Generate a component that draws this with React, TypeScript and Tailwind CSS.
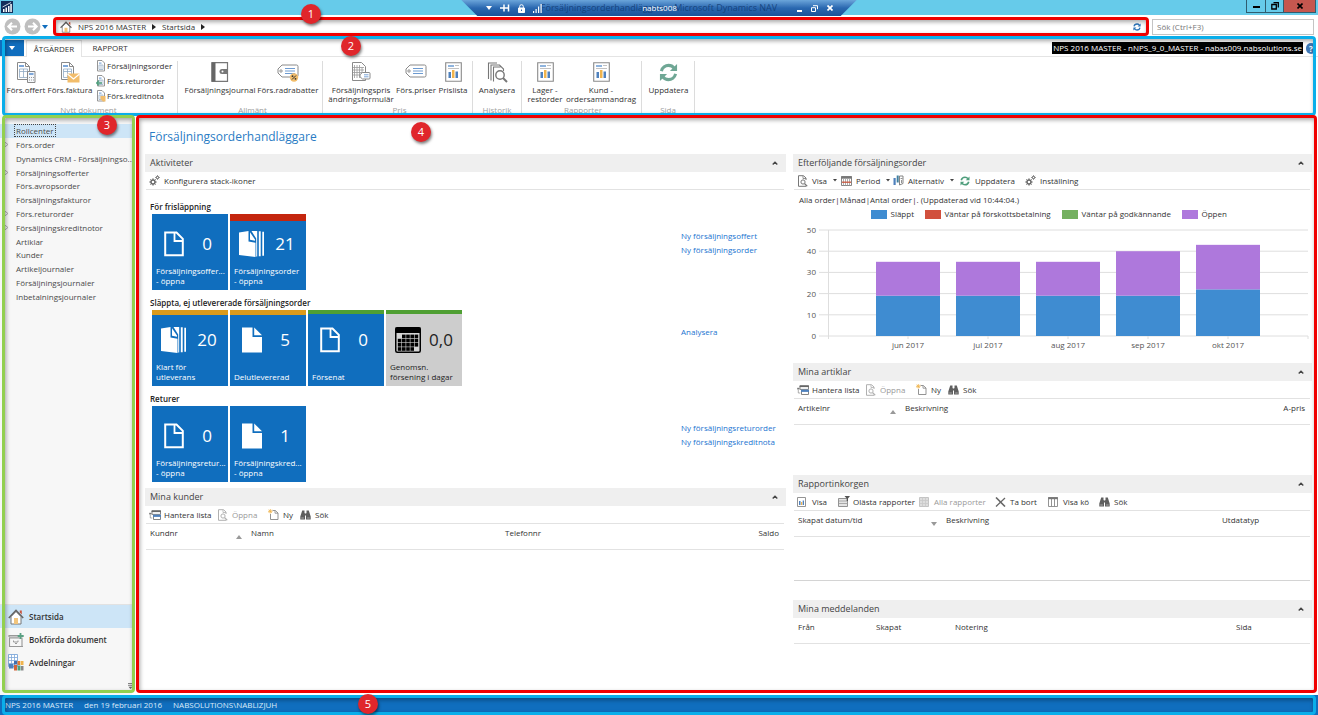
import type { ReactNode } from 'react'

/* ---------- small icons ---------- */

function PageIcon() {
  return (
    <svg width="20" height="26" viewBox="0 0 20 26" fill="none" stroke="#fff" strokeWidth="2">
      <path d="M1.200 1.500h11.300l6.300 6.300v16.500H1.200z" />
      <path d="M10.500 1.500v8.500h8" strokeWidth="1.800" />
    </svg>
  )
}

function SolidPageIcon() {
  return (
    <svg width="20" height="26" viewBox="0 0 20 26" fill="#fff">
      <path d="M0 .5h10.500v9.500H20v15.500H0z" />
      <path d="M12.200 .5L20 8.300h-7.800z" />
    </svg>
  )
}

function StackIcon() {
  return (
    <svg width="26" height="28" viewBox="0 0 26 28" fill="#fff">
      <path d="M0 2.500L9.500 1v10.500l7 1.300V27L0 25z" />
      <path d="M11 2.200l5 7.300v1.300l-5-1z" />
      <path d="M12.500 1h5.700v25.500h-1V8.500z" />
      <path d="M19.800 1.200h1.900v25h-1.900zM23.300 1.700h1.700v24h-1.700z" />
    </svg>
  )
}

function CalendarIcon() {
  const cells = []
  for (let r = 0; r < 4; r++) {
    for (let c = 0; c < 5; c++) {
      if ((r === 0 && c === 0) || (r === 3 && c === 4)) continue
      cells.push(<rect key={`${r}-${c}`} x={2.8 + c * 4.2} y={7.6 + r * 4.2} width="3.600" height="3.600" fill="#000" />)
    }
  }
  return (
    <svg width="26" height="26" viewBox="0 0 26 26">
      <rect x="0.750" y="0.750" width="24.500" height="24.500" rx="1.500" fill="#d4d4d4" stroke="#000" strokeWidth="1.500" />
      <rect x="0.500" y="0.500" width="25" height="5.500" fill="#000" />
      {cells}
    </svg>
  )
}

function DocGrid() {
  return (
    <>
      <path d="M1.500 .5h8l4 4v13h-12z" fill="#fff" stroke="#8a8a8a" />
      <path d="M9.500 .5v4h4" fill="none" stroke="#8a8a8a" />
      <path d="M3 3h5v2H3z" fill="#7da7d9" />
      <path d="M3.500 7h8v8.500h-8zM3.500 9.500h8M7.500 7v8.500" fill="none" stroke="#8fa9c4" strokeWidth=".8" />
    </>
  )
}

function OfferIcon() {
  return (
    <svg width="20" height="21" viewBox="0 0 20 21">
      <DocGrid />
      <path d="M11.500 9.500h7.500v11h-7.500z" fill="#f5f8fb" stroke="#8a8a8a" />
      <path d="M13 11h4.500v2H13z" fill="#7da7d9" />
      <path d="M13 15.500h1M15 15.500h1M17 15.500h1M13 18h1M15 18h1M17 18h1" stroke="#999" />
    </svg>
  )
}

function InvoiceIcon() {
  return (
    <svg width="20" height="21" viewBox="0 0 20 21">
      <DocGrid />
      <path d="M7.500 11.500H19.500v9H7.500z" fill="#f2bd6b" />
      <path d="M7.500 12l6 5 6-5" fill="none" stroke="#fff" strokeWidth="1.100" />
    </svg>
  )
}

function SmallDocIcon({ kind }: { kind: 'order' | 'return' | 'credit' }) {
  return (
    <svg width="10" height="12" viewBox="0 0 10 12">
      <path d="M1.500 .5h4.500l2.500 2.500v8h-7z" fill="#fff" stroke="#8a8a8a" strokeWidth=".9" />
      <path d="M3 2.500h2.500v1.200H3z" fill="#7da7d9" />
      <path d="M3 5h4v4.500H3zM5 5v4.500" fill="none" stroke="#8fa9c4" strokeWidth=".7" />
      {kind === 'return' && <path d="M6 8H1M3 5.500L.7 8 3 10.500" fill="none" stroke="#4f9e7c" strokeWidth="1.300" />}
      {kind === 'credit' && <path d="M4.500 6H9.500v5.500H7L4.500 9z" fill="#f2bd6b" />}
    </svg>
  )
}

function JournalIcon() {
  return (
    <svg width="18" height="20" viewBox="0 0 18 20">
      <path d="M1 .7h15.500v18.600H1z" fill="#fff" stroke="#777" strokeWidth="1.200" />
      <path d="M.5 .5h4v19h-4z" fill="#666" />
      <path d="M11 7h6v5h-6a2.500 2.500 0 0 1 0-5z" fill="#777" />
      <circle cx="11.500" cy="9.500" r="1" fill="#fff" />
    </svg>
  )
}

function TagIcon({ percent }: { percent?: boolean }) {
  return (
    <svg width="22" height="20" viewBox="0 0 22 20">
      <path d="M5 3h14.500a1.500 1.500 0 0 1 1.500 1.500v9a1.500 1.500 0 0 1-1.500 1.500H5L1 11V7z" fill="#fff" stroke="#8a8a8a" />
      <circle cx="4" cy="9" r="1.200" fill="none" stroke="#777" strokeWidth=".8" />
      <path d="M8 6.500h10M8 9h10M8 11.500h10" stroke="#6d9bd1" />
      {percent && (
        <>
          <circle cx="17" cy="15.500" r="4.200" fill="#f2bd6b" />
          <path d="M15 17.500l4-4" stroke="#333" />
          <circle cx="15.500" cy="14.200" r=".9" fill="#333" />
          <circle cx="18.500" cy="16.800" r=".9" fill="#333" />
        </>
      )}
    </svg>
  )
}

function PriceFormIcon() {
  return (
    <svg width="20" height="20" viewBox="0 0 20 20">
      <path d="M1.500 .5h9l4 4v14h-13z" fill="#fff" stroke="#8a8a8a" />
      <path d="M3.500 3v13M6 3v13M8.500 3v13M11 5v11M2 5.500h11M2 8h11M2 10.500h11M2 13h11" stroke="#999" strokeWidth=".8" />
      <path d="M11.500 10.500h6.500a1 1 0 0 1 1 1v4.500a1 1 0 0 1-1 1h-6.500L9 14.800v-2.200z" fill="#fff" stroke="#8a8a8a" />
      <path d="M13 12.800h4.500M13 14.800h4.500" stroke="#6d9bd1" strokeWidth=".9" />
    </svg>
  )
}

function ReportIcon() {
  return (
    <svg width="17" height="20" viewBox="0 0 17 20">
      <path d="M.7 .7h15.600v18.600H.7z" fill="#fff" stroke="#8a8a8a" strokeWidth="1.100" />
      <path d="M3 3h6v2H3z" fill="#8fb4de" />
      <path d="M10 3.500h4M3 6.500h11" stroke="#bbb" strokeWidth=".9" />
      <path d="M3.500 10H6v6H3.500z" fill="#4f81bd" />
      <path d="M7 8h2.500v8H7z" fill="#f0b44d" />
      <path d="M10.500 9.500H13V16h-2.500z" fill="#4f81bd" />
    </svg>
  )
}

function AnalyseIcon() {
  return (
    <svg width="21" height="21" viewBox="0 0 21 21" fill="none" stroke="#777" strokeWidth="1.100">
      <path d="M1.500 17V1h8.500M4 18.500V3h8.500l4 4v2M6.500 19.500V5h7" />
      <circle cx="13" cy="13" r="4.200" fill="#fff" strokeWidth="1.400" />
      <path d="M16 16l4 4" strokeWidth="2" />
    </svg>
  )
}

function RefreshIcon({ size, color }: { size: number; color: string }) {
  return (
    <svg width={size} height={size} viewBox="0 0 20 20" fill="none" stroke={color} strokeWidth="3.200">
      <path d="M2.500 8.500C3.500 4.500 7 2.500 10 2.500c2.500 0 4.500 1 6 3" />
      <path d="M17.500 11.500c-1 4-4.500 6-7.500 6-2.500 0-4.500-1-6-3" />
      <path d="M19 1v7.500h-7.500z" fill={color} stroke="none" />
      <path d="M1 19v-7.500h7.500z" fill={color} stroke="none" />
    </svg>
  )
}

function GearsIcon() {
  return (
    <svg width="11" height="11" viewBox="0 0 11 11" fill="none" stroke="#666">
      <circle cx="4" cy="7" r="2" strokeWidth="1.400" />
      <path d="M4 3.300v1.700M4 9v1.700M.3 7H2M6 7h1.700M1.400 4.400l1.200 1.200M5.400 8.400l1.200 1.200M6.600 4.400L5.400 5.600M2.600 8.400L1.400 9.600" />
      <circle cx="8.500" cy="2.500" r="1.100" />
      <path d="M8.500 .2v1M8.500 3.800v1M6.200 2.500h1M9.800 2.500h1M6.900 .9l.7.700M10.100 4.100l-.7-.7M10.100 .9l-.7.700M6.900 4.100l.7-.7" strokeWidth=".8" />
    </svg>
  )
}

function ManageIcon() {
  return (
    <svg width="12" height="10" viewBox="0 0 12 10">
      <path d="M3 .9h8.500v3.500H3z" fill="#fff" stroke="#777" strokeWidth=".9" />
      <path d="M2.600 .4h9.300v1.700H2.600z" fill="#666" />
      <path d="M.2 2.800h2.300v1.700H.2z" fill="#777" />
      <path d="M4.500 5.500h7v4h-7z" fill="#fff" stroke="#777" strokeWidth=".9" />
      <path d="M4 4.700h8v2.200H4z" fill="#4f81bd" />
      <path d="M1.300 5v3h2" fill="none" stroke="#999" strokeWidth=".8" />
    </svg>
  )
}

function ViewIcon({ faded }: { faded?: boolean }) {
  const color = faded ? '#b0b0b0' : '#777'
  return (
    <svg width="11" height="12" viewBox="0 0 11 12" fill="none" stroke={color}>
      <path d="M9 5V3L6.500 .7H1.500v10.600H9" />
      <path d="M6 1v2.500h3" strokeWidth=".8" />
      <circle cx="6" cy="7" r="2.100" />
      <path d="M7.700 8.700l2.500 2.500" strokeWidth="1.300" />
    </svg>
  )
}

function NewIcon() {
  return (
    <svg width="11" height="11" viewBox="0 0 11 11" fill="none">
      <path d="M4.500 1.500h2.800L10 4v6.500H2.500V5" stroke="#888" strokeWidth=".9" />
      <path d="M7 1.500V4.200h3" stroke="#888" strokeWidth=".8" />
      <path d="M2.300 0v4.600M0 2.300h4.600M.7 .7l3.200 3.200M3.900 .7L.7 3.900" stroke="#f0b44d" strokeWidth=".8" />
    </svg>
  )
}

function BinocularsIcon() {
  return (
    <svg width="11" height="10" viewBox="0 0 11 10" fill="#5f5f5f">
      <path d="M2.200 .5h2.300v2.300l.5 1V9.500H.3V6.500zM6.500 .5h2.300l1.900 6v3H6V3.800l.5-1z" />
      <path d="M4.500 3.500h2v2h-2z" />
      <path d="M1.300 7.500h2.500v1H1.300zM7.200 7.500h2.500v1H7.200z" fill="#aaa" />
    </svg>
  )
}

function PeriodIcon() {
  return (
    <svg width="11" height="10" viewBox="0 0 11 10">
      <path d="M.5 .5h10v9H.5z" fill="#fff" stroke="#777" strokeWidth=".9" />
      <path d="M.3 .3h10.400v2.400H.3z" fill="#777" />
      <path d="M2.500 3v6.500M4.500 3v6.500M6.500 3v6.500M8.500 3v6.500" stroke="#999" strokeWidth=".8" />
      <path d="M1 6.200h9" stroke="#c9553d" strokeWidth="1.300" />
    </svg>
  )
}

function OptionsIcon() {
  return (
    <svg width="11" height="11" viewBox="0 0 11 11">
      <path d="M.5 3h2.200v7H.5z" fill="#4f81bd" />
      <path d="M3.700 .5h2v7h-2z" fill="#3f7f9e" />
      <path d="M6.500 1H10v7.500L6.500 10z" fill="#fff" stroke="#777" strokeWidth=".9" />
      <path d="M7.500 3.500H9.500M8.500 5v3" stroke="#777" strokeWidth=".8" />
    </svg>
  )
}

function InboxViewIcon() {
  return (
    <svg width="9" height="10" viewBox="0 0 9 10">
      <path d="M.5 .5h8v9h-8z" fill="#fff" stroke="#888" strokeWidth=".9" />
      <path d="M2 4h1.500v4H2z" fill="#4f81bd" />
      <path d="M4 5h1.200v3H4z" fill="#f0b44d" />
      <path d="M5.700 3.500H7V8H5.700z" fill="#4f81bd" />
    </svg>
  )
}

function UnreadIcon() {
  return (
    <svg width="12" height="11" viewBox="0 0 12 11">
      <path d="M.5 2.500h9v8h-9z" fill="#e4e4e4" stroke="#888" strokeWidth=".9" />
      <path d="M.5 5h9M.5 7.500h9" stroke="#999" strokeWidth=".8" />
      <path d="M6.500 0H12L10 2.500V5H8.700V2.500z" fill="#555" />
    </svg>
  )
}

function AllIcon() {
  return (
    <svg width="10" height="10" viewBox="0 0 10 10">
      <path d="M.5 .5h9v9h-9z" fill="#ddd" stroke="#c4c4c4" />
      <path d="M3.500 .5v9M6.500 .5v9M.5 3.500h9M.5 6.500h9" stroke="#c9c9c9" strokeWidth=".8" />
    </svg>
  )
}

function DeleteIcon() {
  return (
    <svg width="11" height="10" viewBox="0 0 11 10" stroke="#666" fill="none">
      <path d="M1 .5l9 9" strokeWidth="1.600" />
      <path d="M10 1L1 9.500" strokeWidth="1.200" />
    </svg>
  )
}

function QueueIcon() {
  return (
    <svg width="10" height="10" viewBox="0 0 10 10">
      <path d="M.5 .5h9v9h-9zM3.500 2v7.500M6.500 2v7.500" fill="#fff" stroke="#888" strokeWidth=".9" />
      <path d="M.2 .2h9.600v2H.2z" fill="#777" />
    </svg>
  )
}

function HomeIcon({ size }: { size: number }) {
  return (
    <svg width={size} height={size} viewBox="0 0 16 16">
      <path d="M11.800 1.500h2v4l-2-2z" fill="#c9553d" />
      <path d="M3 7.500v7.500h10V7.500L8 2.500z" fill="#fff" stroke="#777" />
      <path d="M6 9h4v6H6z" fill="#f2c57c" />
      <path d="M.8 9L8 1.500 15.200 9" fill="none" stroke="#666" strokeWidth="1.600" />
    </svg>
  )
}

function ArchiveIcon() {
  return (
    <svg width="16" height="16" viewBox="0 0 16 16" fill="none">
      <path d="M1 5V3.500h9M1.500 6h12.500v8.500H1.500z" stroke="#999" strokeWidth="1.100" />
      <path d="M1 5h10M1 14.500h14" stroke="#999" />
      <path d="M5.500 8.500v1.500h4.500V8.500M7 11.500h2" stroke="#999" />
      <path d="M12.500 1v6M9.700 4h6" stroke="#5aa083" strokeWidth="1.800" />
    </svg>
  )
}

function DepartmentsIcon() {
  return (
    <svg width="16" height="17" viewBox="0 0 16 17">
      <path d="M.5 .5h9v12h-9z" fill="#fff" stroke="#7da7d9" strokeWidth=".9" />
      <path d="M.5 3.500h9M.5 6.500h9M.5 9.500h9M3.500 .5v12M6.500 .5v12" stroke="#7da7d9" strokeWidth=".8" />
      <path d="M1 10h4.500v4.500H1z" fill="#4f81bd" />
      <path d="M6 11h3v5.500H6z" fill="#d3633a" />
      <path d="M9.500 11.500h3v5h-3z" fill="#4f9e7c" />
      <path d="M6 7h3v3.500H6z" fill="#3f6fae" />
      <path d="M9.500 7h2.500v4H9.500z" fill="#e07a35" />
      <path d="M12.500 7h3v4h-3z" fill="#f0b44d" />
      <path d="M13 12h2.500v4.500H13z" fill="#888" />
    </svg>
  )
}

function NavArrow({ back }: { back?: boolean }) {
  return (
    <svg width="17" height="17" viewBox="0 0 17 17" fill="none">
      <circle cx="8.500" cy="8.500" r="8" fill="#bfbfbf" />
      <path d={back ? 'M13 8.500H4.500M8 4.800L4.300 8.500 8 12.200' : 'M4 8.500h8.500M9 4.800l3.700 3.700L9 12.200'} stroke="#fff" strokeWidth="2" />
    </svg>
  )
}

function Caret() {
  return (
    <svg width="6" height="4" viewBox="0 0 6 4">
      <path d="M0 0h6L3 4z" fill="currentColor" />
    </svg>
  )
}

function Chevron() {
  return (
    <svg width="6" height="4" viewBox="0 0 6 4" fill="none">
      <path d="M.7 3.500L3 1.200l2.300 2.300" stroke="#444" strokeWidth="1.400" />
    </svg>
  )
}

/* ---------- callouts ---------- */

function Frame({ className }: { className: string }) {
  return (
    <div
      className={`absolute z-10 pointer-events-none rounded-[4px] border-[3px] shadow-[inset_1px_2px_4px_rgba(0,0,0,0.35)] ${className}`}
    />
  )
}

function Badge({ n, className }: { n: number; className: string }) {
  return (
    <div
      className={`absolute z-20 w-5 h-5 rounded-full bg-[#e0262b] text-white text-[11px] leading-5 text-center shadow-[1px_2px_3px_rgba(0,0,0,0.5)] ${className}`}
    >
      {n}
    </div>
  )
}

/* ---------- ribbon ---------- */

interface BigButtonProps {
  icon: ReactNode
  lines: string[]
  width: string
}

function BigButton({ icon, lines, width }: BigButtonProps) {
  return (
    <button className={`flex flex-col items-center shrink-0 whitespace-nowrap leading-[9px] ${width}`}>
      <span className="h-[22px] mb-[2px] flex items-center">{icon}</span>
      {lines.map((line) => (
        <span key={line}>{line}</span>
      ))}
    </button>
  )
}

function RibbonGroup({ title, width, children }: { title: string; width: string; children: ReactNode }) {
  return (
    <div className={`flex flex-col justify-between h-[54px] border-r border-[#dcdcdc] ${width}`}>
      <div className="flex">{children}</div>
      <div className="text-center text-[#a0a0a0] leading-[10px]">{title}</div>
    </div>
  )
}

const smallButtons = [
  { label: 'Försäljningsorder', kind: 'order' },
  { label: 'Förs.returorder', kind: 'return' },
  { label: 'Förs.kreditnota', kind: 'credit' },
] as const

function Ribbon() {
  return (
    <section className="relative bg-white">
      <div className="flex items-end h-[21px] pt-1 border-b border-[#e4e4e4]">
        <button aria-label="Meny" className="w-6 h-4 bg-[#106ebe] flex items-center justify-center text-white">
          <Caret />
        </button>
        <button className="w-[56px] h-[17px] ml-[2px] -mb-px bg-white border-x border-t border-[#e4e4e4] leading-4">
          ÅTGÄRDER
        </button>
        <button className="w-[56px] h-4 leading-4">RAPPORT</button>
        <span className="ml-auto mb-[2px] px-px bg-black text-white leading-[12px]">
          NPS 2016 MASTER - nNPS_9_0_MASTER - nabas009.nabsolutions.se
        </span>
        <button aria-label="Hjälp" className="ml-[3px] mr-[2px] mb-[2px] w-[10px] h-[11px] rounded-full bg-[#3f78b5] text-white font-bold leading-[11px]">
          ?
        </button>
      </div>

      <div className="flex pt-1">
        <RibbonGroup title="Nytt dokument" width="w-[178px]">
          <div className="w-1" />
          <BigButton icon={<OfferIcon />} lines={['Förs.offert']} width="w-[44px]" />
          <BigButton icon={<InvoiceIcon />} lines={['Förs.faktura']} width="w-[44px]" />
          <div className="ml-1 -mt-[3px] h-[45px] flex flex-col">
            {smallButtons.map((b) => (
              <button key={b.label} className="flex items-center gap-px h-[15px] whitespace-nowrap">
                <SmallDocIcon kind={b.kind} />
                {b.label}
              </button>
            ))}
          </div>
        </RibbonGroup>
        <RibbonGroup title="Allmänt" width="w-[145px] pl-[5px]">
          <BigButton icon={<JournalIcon />} lines={['Försäljningsjournal']} width="w-[74px]" />
          <BigButton icon={<TagIcon percent />} lines={['Förs.radrabatter']} width="w-[62px]" />
        </RibbonGroup>
        <RibbonGroup title="Pris" width="w-[150px] pl-[4px]">
          <BigButton icon={<PriceFormIcon />} lines={['Försäljningspris', 'ändringsformulär']} width="w-[68px]" />
          <BigButton icon={<TagIcon />} lines={['Förs.priser']} width="w-[42px]" />
          <BigButton icon={<ReportIcon />} lines={['Prislista']} width="w-[32px]" />
        </RibbonGroup>
        <RibbonGroup title="Historik" width="w-[49px]">
          <BigButton icon={<AnalyseIcon />} lines={['Analysera']} width="w-[48px]" />
        </RibbonGroup>
        <RibbonGroup title="Rapporter" width="w-[120px] pl-[3px]">
          <BigButton icon={<ReportIcon />} lines={['Lager -', 'restorder']} width="w-[40px]" />
          <BigButton icon={<ReportIcon />} lines={['Kund -', 'ordersammandrag']} width="w-[72px]" />
        </RibbonGroup>
        <RibbonGroup title="Sida" width="w-[53px]">
          <BigButton icon={<RefreshIcon size={19} color="#6fa795" />} lines={['Uppdatera']} width="w-[53px]" />
        </RibbonGroup>
      </div>
      <Frame className="left-[2px] right-[2px] top-0 -bottom-px border-[#0aaeea]" />
      <Badge n={2} className="left-[341px] top-0" />
    </section>
  )
}

/* ---------- top bars ---------- */

function RemoteBar() {
  return (
    <div className="absolute z-20 left-[35%] right-[35%] top-0 h-4 flex items-center text-white bg-linear-to-b from-[#6ba5da] via-[#2a68b0] to-[#1a5299] [clip-path:polygon(0_0,100%_0,calc(100%_-_16px)_100%,16px_100%)]">
      <span className="absolute inset-x-0 text-center text-[9px] text-[#0f3870]/80 whitespace-nowrap">
        Försäljningsorderhandläggare - Microsoft Dynamics NAV
      </span>
      <div className="relative flex-1 flex items-center gap-2 pl-[25px]">
        <Caret />
        <svg width="10" height="8" viewBox="0 0 10 8" stroke="#fff" fill="none">
          <path d="M0 4h4M4 .5v7M8.500 .5v7M4 4h4.500" strokeWidth="1.500" />
        </svg>
        <svg width="7" height="9" viewBox="0 0 7 9" fill="none" stroke="#fff">
          <path d="M1.700 4V2.500a1.800 1.800 0 0 1 3.600 0V4" />
          <path d="M.5 4h6v4.500h-6z" fill="#fff" />
          <path d="M3.500 5.500v1.500" stroke="#2a68b0" />
        </svg>
        <svg width="9" height="9" viewBox="0 0 9 9" fill="#fff">
          <path d="M0 7h1.200v2H0zM2.500 5h1.200v4H2.500zM5 2.500h1.200V9H5zM7.500 0h1.200v9H7.500z" />
        </svg>
      </div>
      <span className="relative">nabts008</span>
      <div className="relative flex-1 flex items-center justify-end gap-[9px] pr-[24px]">
        <button aria-label="Minimera" className="w-[5px] h-[7px] border-b-2 border-white" />
        <button aria-label="Återställ">
          <svg width="7" height="7" viewBox="0 0 7 7" fill="none" stroke="#fff">
            <path d="M2 .7h4.500v3.500M.5 2.700H4.500v3.800H.5z" />
          </svg>
        </button>
        <button aria-label="Stäng">
          <svg width="6" height="6" viewBox="0 0 6 6" stroke="#fff" strokeWidth="1.700">
            <path d="M.5 .5l5 5M5.500 .5l-5 5" />
          </svg>
        </button>
      </div>
    </div>
  )
}

function TitleBar() {
  return (
    <div className="relative h-[15px] flex bg-[#66cbea]">
      <svg width="12" height="12" viewBox="0 0 12 12" className="ml-px mt-px">
        <path d="M0 0h12v12H0z" fill="#14305c" />
        <path d="M2 8h1.500v3H2zM4.500 6.500H6V11H4.500zM7 5h1.500v6H7zM9.300 3h1.500v8H9.300z" fill="#fff" />
        <path d="M1.500 6L10 1.500" stroke="#fff" strokeWidth=".8" />
      </svg>
      <div className="ml-auto mr-[2px] h-[13px] flex border-x border-b border-[#2f5d70]">
        <button aria-label="Minimera fönster" className="w-[19px] flex items-center justify-center border-r border-[#2f5d70]">
          <span className="w-[7px] h-[2px] mt-px bg-black" />
        </button>
        <button aria-label="Återställ fönster" className="w-[18px] flex items-center justify-center border-r border-[#2f5d70]">
          <svg width="8" height="8" viewBox="0 0 8 8" fill="none" stroke="#000">
            <path d="M2.500 .7h4.800v4.800M.8 2.500h4.500v4.500H.8z" strokeWidth="1.300" />
          </svg>
        </button>
        <button aria-label="Stäng fönster" className="w-[31px] flex items-center justify-center bg-[#c5574f]">
          <svg width="6" height="6" viewBox="0 0 6 6" stroke="#000" strokeWidth="1.600">
            <path d="M.5 .5l5 5M5.500 .5l-5 5" />
          </svg>
        </button>
      </div>
      <RemoteBar />
    </div>
  )
}

function Crumb() {
  return (
    <svg width="4" height="6" viewBox="0 0 4 6">
      <path d="M0 0l4 3-4 3z" fill="#222" />
    </svg>
  )
}

function AddressRow() {
  return (
    <div className="relative h-[21px] flex items-center bg-white pl-1 pr-1">
      <button aria-label="Bakåt" className="mr-[3px] mt-[2px]">
        <NavArrow back />
      </button>
      <button aria-label="Framåt" className="mt-[2px]">
        <NavArrow />
      </button>
      <button aria-label="Historik" className="mx-px mt-[2px] text-[#106ebe]">
        <Caret />
      </button>
      <nav className="flex-1 h-[17px] ml-1 mt-[2px] px-[7px] flex items-center gap-[6px]">
        <HomeIcon size={12} />
        <a href="#master">NPS 2016 MASTER</a>
        <Crumb />
        <a href="#start">Startsida</a>
        <Crumb />
        <button aria-label="Uppdatera sida" className="ml-auto">
          <RefreshIcon size={8} color="#2a72b8" />
        </button>
      </nav>
      <input
        aria-label="Sök"
        placeholder="Sök (Ctrl+F3)"
        className="w-[162px] h-4 ml-1 mt-[2px] px-1 border border-[#c4c4c4] placeholder:text-[#777] outline-none"
      />
      <Frame className="left-[53px] right-[169px] top-[2px] bottom-0 border-[#f00000]" />
      <Badge n={1} className="left-[301px] -top-[11px]" />
    </div>
  )
}

/* ---------- sidebar ---------- */

const navItems = [
  { label: 'Rollcenter' },
  { label: 'Förs.order', nested: true },
  { label: 'Dynamics CRM - Försäljningso..' },
  { label: 'Försäljningsofferter', nested: true },
  { label: 'Förs.avropsorder' },
  { label: 'Försäljningsfakturor' },
  { label: 'Förs.returorder', nested: true },
  { label: 'Försäljningskreditnotor', nested: true },
  { label: 'Artiklar' },
  { label: 'Kunder' },
  { label: 'Artikeljournaler' },
  { label: 'Försäljningsjournaler' },
  { label: 'Inbetalningsjournaler' },
]

const areas = [
  { label: 'Startsida', icon: <HomeIcon size={16} /> },
  { label: 'Bokförda dokument', icon: <ArchiveIcon /> },
  { label: 'Avdelningar', icon: <DepartmentsIcon /> },
]

function Sidebar() {
  return (
    <aside className="relative w-[136px] shrink-0 flex flex-col bg-[#f7f7f7] border-r-4 border-white pt-[9px] text-[#4a4a4a]">
      <nav className="h-[179px] flex flex-col">
        {navItems.map((item, i) => (
          <a key={item.label} href="#nav" className={`flex-1 flex items-center pl-1 ${i === 0 ? 'bg-[#cde5f7]' : ''}`}>
            <span className="w-[10px] shrink-0">
              {item.nested && (
                <svg width="5" height="7" viewBox="0 0 5 7" fill="none" stroke="#999">
                  <path d="M.7 1L4 3.500.7 6z" strokeWidth=".8" />
                </svg>
              )}
            </span>
            <span className={`whitespace-nowrap px-px border leading-[11px] ${i === 0 ? 'border-dotted border-[#444]' : 'border-transparent'}`}>
              {item.label}
            </span>
          </a>
        ))}
      </nav>
      <nav className="mt-auto mb-[21px] border-t border-[#e2e2e2] font-semibold text-[#333]">
        {areas.map((a, i) => (
          <a key={a.label} href="#area" className={`h-[23px] flex items-center gap-[5px] pl-2 ${i === 0 ? 'bg-[#cde5f7]' : ''}`}>
            {a.icon}
            {a.label}
          </a>
        ))}
      </nav>
      <svg width="5" height="6" viewBox="0 0 5 6" className="absolute right-[-1px] bottom-[6px]">
        <path d="M0 .5h5M0 2.300h5" stroke="#666" strokeWidth=".8" />
        <path d="M.5 3.800h4L2.500 6z" fill="#666" />
      </svg>
      <Frame className="left-[2px] -right-[3px] top-0 bottom-[2px] border-[#92d050]" />
      <Badge n={3} className="left-[97px] top-0" />
    </aside>
  )
}

/* ---------- panels ---------- */

function Panel({ title, className, children }: { title: string; className?: string; children: ReactNode }) {
  return (
    <section className={className}>
      <h2 className="h-[18px] flex items-center justify-between bg-[#efefef] pl-[5px] pr-2 text-[9px] text-[#444]">
        {title}
        <button aria-label={`Dölj ${title}`}>
          <Chevron />
        </button>
      </h2>
      {children}
    </section>
  )
}

interface Action {
  label: string
  icon: ReactNode
  width: string
  menu?: boolean
  disabled?: boolean
}

function Toolbar({ actions }: { actions: Action[] }) {
  return (
    <div className="h-[18px] flex ml-px mr-[2px] pl-[3px] border-b border-[#e2e2e2]">
      {actions.map((a) => (
        <button
          key={a.label}
          disabled={a.disabled}
          className={`flex items-center gap-[3px] whitespace-nowrap disabled:text-[#999] ${a.width}`}
        >
          <span className="w-[12px] shrink-0">{a.icon}</span>
          {a.label}
          {a.menu && (
            <svg width="4" height="3" viewBox="0 0 4 3" className="ml-[3px]">
              <path d="M0 0h4L2 2.500z" fill="#444" />
            </svg>
          )}
        </button>
      ))}
    </div>
  )
}

interface Column {
  label: string
  width: string
  sort?: 'up' | 'down'
  right?: boolean
}

function ListHeader({ columns }: { columns: Column[] }) {
  return (
    <div className="ml-px mr-[2px] border-b border-[#e2e2e2]">
      <table className="w-full table-fixed">
        <thead>
          <tr className="h-[25px] align-top">
            {columns.map((c) => (
              <th key={c.label} scope="col" className={`pt-[3px] font-normal leading-[11px] ${c.right ? 'text-right pr-[5px]' : 'text-left pl-1'} ${c.width}`}>
                <span className="flex justify-between">
                  <span className={c.right ? 'ml-auto' : ''}>{c.label}</span>
                  {c.sort && (
                    <svg width="6" height="4" viewBox="0 0 6 4" className="mr-[5px] mt-[8px]">
                      <path d={c.sort === 'up' ? 'M0 4h6L3 0z' : 'M0 0h6L3 4z'} fill="#999" />
                    </svg>
                  )}
                </span>
              </th>
            ))}
          </tr>
        </thead>
      </table>
    </div>
  )
}

interface TileProps {
  icon: ReactNode
  value: string
  label: string[]
  bar?: string
  grey?: boolean
}

function Tile({ icon, value, label, bar, grey }: TileProps) {
  return (
    <button className={`relative w-[76px] h-[76px] flex flex-col text-left ${grey ? 'bg-[#cdcdcd] text-[#222]' : 'bg-[#106ebe] text-white'}`}>
      {bar && <span className={`absolute inset-x-0 top-0 ${bar}`} />}
      <span className="mt-4 h-7 flex items-center pl-2">
        <span className="w-[28px] flex justify-center">{icon}</span>
        <span className="w-[38px] text-center text-[17px] leading-7">{value}</span>
      </span>
      <span className="mt-auto mb-1 pl-1 leading-[10px] whitespace-nowrap">
        {label.map((line) => (
          <span key={line} className="block">
            {line}
          </span>
        ))}
      </span>
    </button>
  )
}

function CueGroup({ title, tiles, links }: { title: string; tiles: TileProps[]; links: string[] }) {
  return (
    <div className="mb-[6px]">
      <h3 className="h-[14px] pl-[5px] font-semibold text-[#222] leading-[14px]">{title}</h3>
      <div className="flex pl-[7px]">
        <div className="flex-1 flex gap-[2px]">
          {tiles.map((t) => (
            <Tile key={t.label[0]} {...t} />
          ))}
        </div>
        <div className="w-[105px] pt-[15px] flex flex-col text-[#1a73d0] leading-[14px]">
          {links.map((l) => (
            <a key={l} href="#new">
              {l}
            </a>
          ))}
        </div>
      </div>
    </div>
  )
}

const cueGroups = [
  {
    title: 'För frisläppning',
    links: ['Ny försäljningsoffert', 'Ny försäljningsorder'],
    tiles: [
      { icon: <PageIcon />, value: '0', label: ['Försäljningsoffer...', '- öppna'] },
      { icon: <StackIcon />, value: '21', label: ['Försäljningsorder', '- öppna'], bar: 'h-[7px] bg-[#c4260e]' },
    ],
  },
  {
    title: 'Släppta, ej utlevererade försäljningsorder',
    links: ['Analysera'],
    tiles: [
      { icon: <StackIcon />, value: '20', label: ['Klart för', 'utleverans'], bar: 'h-[5px] bg-[#db9a1b]' },
      { icon: <SolidPageIcon />, value: '5', label: ['Delutlevererad'], bar: 'h-[5px] bg-[#db9a1b]' },
      { icon: <PageIcon />, value: '0', label: ['Försenat'], bar: 'h-1 bg-[#4f9f33]' },
      { icon: <CalendarIcon />, value: '0,0', label: ['Genomsn.', 'försening i dagar'], bar: 'h-1 bg-[#4f9f33]', grey: true },
    ],
  },
  {
    title: 'Returer',
    links: ['Ny försäljningsreturorder', 'Ny försäljningskreditnota'],
    tiles: [
      { icon: <PageIcon />, value: '0', label: ['Försäljningsretur...', '- öppna'] },
      { icon: <SolidPageIcon />, value: '1', label: ['Försäljningskred...', '- öppna'] },
    ],
  },
]

/* ---------- chart ---------- */

const months = [
  { label: 'jun 2017', released: 19, open: 16 },
  { label: 'jul 2017', released: 19, open: 16 },
  { label: 'aug 2017', released: 19, open: 16 },
  { label: 'sep 2017', released: 19, open: 21 },
  { label: 'okt 2017', released: 22, open: 21 },
]

const legend = [
  { label: 'Släppt', color: 'bg-[#3f8cd1]', width: 'w-[54px]' },
  { label: 'Väntar på förskottsbetalning', color: 'bg-[#d1503d]', width: 'w-[137px]' },
  { label: 'Väntar på godkännande', color: 'bg-[#74b060]', width: 'w-[120px]' },
  { label: 'Öppen', color: 'bg-[#ae78dc]', width: 'w-[46px]' },
]

function OrderChart() {
  const y = (v: number) => 114 - v * 2.12
  return (
    <svg viewBox="0 0 519 136" className="w-full" fontSize="8" fill="#555">
      {[0, 10, 20, 30, 40, 50].map((v) => (
        <g key={v}>
          <line x1="26" x2="515" y1={y(v)} y2={y(v)} stroke="#dedede" />
          <text x="23" y={y(v) + 3} textAnchor="end">
            {v}
          </text>
        </g>
      ))}
      <path d="M35.500 8v109M515 114v3" stroke="#dedede" />
      {months.map((m, i) => {
        const x = 83 + i * 80
        return (
          <g key={m.label}>
            <rect x={x} y={y(m.released)} width="64" height={m.released * 2.12} fill="#3f8cd1" />
            <rect x={x} y={y(m.released + m.open)} width="64" height={m.open * 2.12} fill="#ae78dc" />
            <line x1={x + 32} x2={x + 32} y1="114" y2="117" stroke="#dedede" />
            <text x={x + 32} y="126" textAnchor="middle">
              {m.label}
            </text>
          </g>
        )
      })}
    </svg>
  )
}

/* ---------- page data ---------- */

const listActions: Action[] = [
  { label: 'Hantera lista', icon: <ManageIcon />, width: 'w-[68px]' },
  { label: 'Öppna', icon: <ViewIcon faded />, width: 'w-[51px]', disabled: true },
  { label: 'Ny', icon: <NewIcon />, width: 'w-[32px]' },
  { label: 'Sök', icon: <BinocularsIcon />, width: 'w-[40px]' },
]

const chartActions: Action[] = [
  { label: 'Visa', icon: <ViewIcon />, width: 'w-[44px]', menu: true },
  { label: 'Period', icon: <PeriodIcon />, width: 'w-[52px]', menu: true },
  { label: 'Alternativ', icon: <OptionsIcon />, width: 'w-[67px]', menu: true },
  { label: 'Uppdatera', icon: <RefreshIcon size={10} color="#4f9e7c" />, width: 'w-[65px]' },
  { label: 'Inställning', icon: <GearsIcon />, width: 'w-[60px]' },
]

const inboxActions: Action[] = [
  { label: 'Visa', icon: <InboxViewIcon />, width: 'w-[41px]' },
  { label: 'Olästa rapporter', icon: <UnreadIcon />, width: 'w-[81px]' },
  { label: 'Alla rapporter', icon: <AllIcon />, width: 'w-[76px]', disabled: true },
  { label: 'Ta bort', icon: <DeleteIcon />, width: 'w-[53px]' },
  { label: 'Visa kö', icon: <QueueIcon />, width: 'w-[51px]' },
  { label: 'Sök', icon: <BinocularsIcon />, width: 'w-[40px]' },
]

function Content() {
  return (
    <main className="relative flex-1 min-w-0 pl-[9px] pr-[6px] bg-white">
      <h1 className="pt-[13px] pl-1 h-[39px] text-[12px] leading-[18px] text-[#2a7cc4]">Försäljningsorderhandläggare</h1>
      <div className="grid grid-cols-[641fr_519fr] gap-[7px]">
        <div className="min-w-0">
          <Panel title="Aktiviteter">
            <Toolbar actions={[{ label: 'Konfigurera stack-ikoner', icon: <GearsIcon />, width: 'w-[120px]' }]} />
            <div className="pt-[10px]">
              {cueGroups.map((g) => (
                <CueGroup key={g.title} {...g} />
              ))}
            </div>
          </Panel>
          <Panel title="Mina kunder" className="mt-1">
            <Toolbar actions={listActions} />
            <ListHeader
              columns={[
                { label: 'Kundnr', width: 'w-[101px]', sort: 'up' },
                { label: 'Namn', width: 'w-[254px]' },
                { label: 'Telefonnr', width: '' },
                { label: 'Saldo', width: 'w-[90px]', right: true },
              ]}
            />
          </Panel>
        </div>

        <div className="min-w-0">
          <Panel title="Efterföljande försäljningsorder">
            <Toolbar actions={chartActions} />
            <p className="pl-[6px] pt-1 leading-[12px]">Alla order|Månad|Antal order|. (Uppdaterad vid 10:44:04.)</p>
            <div className="h-4 flex items-center justify-center pr-[7px]">
              {legend.map((l) => (
                <span key={l.label} className={`flex items-center gap-1 whitespace-nowrap ${l.width}`}>
                  <span className={`w-4 h-[9px] shrink-0 ${l.color}`} />
                  {l.label}
                </span>
              ))}
            </div>
            <OrderChart />
          </Panel>
          <Panel title="Mina artiklar" className="mt-[5px]">
            <Toolbar actions={listActions} />
            <ListHeader
              columns={[
                { label: 'Artikelnr', width: 'w-[107px]', sort: 'up' },
                { label: 'Beskrivning', width: '' },
                { label: 'A-pris', width: 'w-[90px]', right: true },
              ]}
            />
          </Panel>
          <Panel title="Rapportinkorgen" className="mt-[50px]">
            <Toolbar actions={inboxActions} />
            <ListHeader
              columns={[
                { label: 'Skapat datum/tid', width: 'w-[148px]', sort: 'down' },
                { label: 'Beskrivning', width: '' },
                { label: 'Utdatatyp', width: 'w-[92px]' },
              ]}
            />
            <div className="h-11 ml-px mr-[2px] border-b border-[#d4d4d4]" />
          </Panel>
          <Panel title="Mina meddelanden" className="mt-[19px] mb-[46px]">
            <ListHeader
              columns={[
                { label: 'Från', width: 'w-[78px]' },
                { label: 'Skapat', width: 'w-[79px]' },
                { label: 'Notering', width: '' },
                { label: 'Sida', width: 'w-[78px]' },
              ]}
            />
          </Panel>
        </div>
      </div>
      <Frame className="left-0 right-[1px] top-0 bottom-[2px] border-[#f00000]" />
      <Badge n={4} className="left-[275px] top-[7px]" />
    </main>
  )
}

export default function App() {
  return (
    <div className="min-h-screen flex flex-col bg-white text-[8px] leading-[12px] text-[#333] font-['Open_Sans','Noto_Sans',sans-serif]">
      <TitleBar />
      <AddressRow />
      <Ribbon />
      <div className="flex-1 flex">
        <Sidebar />
        <Content />
      </div>
      <footer className="relative h-5 flex items-center gap-[11px] pl-[5px] bg-[#106ebe] text-[#dcebf8]">
        <span>NPS 2016 MASTER</span>
        <span>den 19 februari 2016</span>
        <span>NABSOLUTIONS\NABLIZJUH</span>
        <Frame className="left-[2px] right-[2px] top-0 bottom-0 border-[#0aaeea]" />
        <Badge n={5} className="left-[358px] -top-px" />
      </footer>
    </div>
  )
}
